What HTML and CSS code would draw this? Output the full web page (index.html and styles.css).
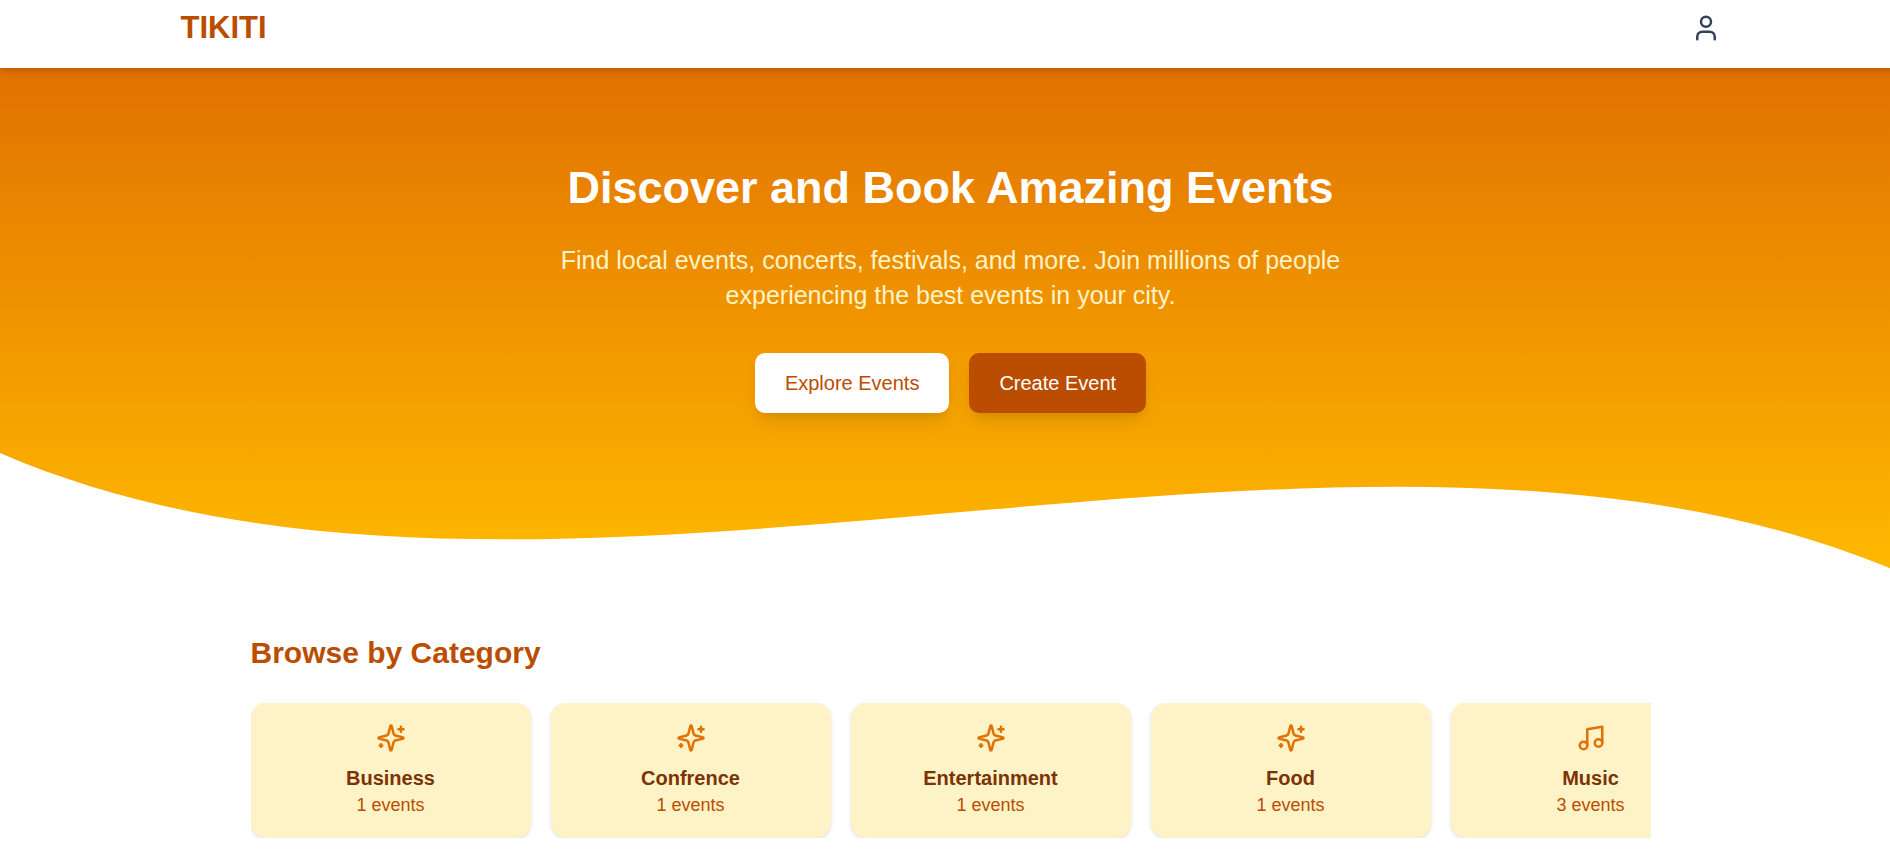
FILE: index.html
```html
<!DOCTYPE html>
<html lang="en">
<head>
<meta charset="utf-8">
<meta name="viewport" content="width=device-width, initial-scale=1">
<title>TIKITI</title>
<link rel="stylesheet" href="styles.css">
</head>
<body>
<svg class="symbols" aria-hidden="true">
  <symbol id="sparkles" viewBox="0 0 24 24">
    <path d="M9.937 15.5A2 2 0 0 0 8.5 14.063l-6.135-1.582a.5.5 0 0 1 0-.962L8.5 9.936A2 2 0 0 0 9.937 8.5l1.582-6.135a.5.5 0 0 1 .963 0L14.063 8.5A2 2 0 0 0 15.5 9.937l6.135 1.581a.5.5 0 0 1 0 .964L15.5 14.063a2 2 0 0 0-1.437 1.437l-1.582 6.135a.5.5 0 0 1-.963 0z"/>
    <path d="M20 3v4M22 5h-4M4 17v2M5 18H3"/>
  </symbol>
  <symbol id="music" viewBox="0 0 24 24">
    <path d="M9 18V5l12-2v13"/><circle cx="6" cy="18" r="3"/><circle cx="18" cy="16" r="3"/>
  </symbol>
  <symbol id="user" viewBox="0 0 24 24">
    <path d="M19 21v-2a4 4 0 0 0-4-4H9a4 4 0 0 0-4 4v2"/><circle cx="12" cy="7" r="4"/>
  </symbol>
</svg>
<div class="page">
  <header class="header">
    <div class="header-inner">
      <a class="logo" href="#">TIKITI</a>
      <button class="account" type="button" aria-label="Account"><svg class="icon"><use href="#user"/></svg></button>
    </div>
  </header>
  <main>
    <section class="hero">
      <svg class="wave" viewBox="0 0 1900 160" preserveAspectRatio="none" aria-hidden="true">
        <path d="M0 40C550 278 1350 -78 1900 160V161H0Z"/>
      </svg>
      <div class="hero-inner">
        <h1 class="hero-title">Discover and Book Amazing Events</h1>
        <p class="hero-text">Find local events, concerts, festivals, and more. Join millions of people experiencing the best events in your city.</p>
        <div class="actions">
          <a class="button button-light" href="#">Explore Events</a>
          <a class="button button-dark" href="#">Create Event</a>
        </div>
      </div>
    </section>
    <section class="categories">
      <h2 class="section-title">Browse by Category</h2>
      <div class="card-row">
        <a class="card" href="#"><svg class="icon"><use href="#sparkles"/></svg><h3 class="card-title">Business</h3><p class="card-count">1 events</p></a>
        <a class="card" href="#"><svg class="icon"><use href="#sparkles"/></svg><h3 class="card-title">Confrence</h3><p class="card-count">1 events</p></a>
        <a class="card" href="#"><svg class="icon"><use href="#sparkles"/></svg><h3 class="card-title">Entertainment</h3><p class="card-count">1 events</p></a>
        <a class="card" href="#"><svg class="icon"><use href="#sparkles"/></svg><h3 class="card-title">Food</h3><p class="card-count">1 events</p></a>
        <a class="card" href="#"><svg class="icon"><use href="#music"/></svg><h3 class="card-title">Music</h3><p class="card-count">3 events</p></a>
      </div>
    </section>
  </main>
</div>
</body>
</html>
```
FILE: styles.css
```css
*, *::before, *::after { box-sizing: border-box; }
html, body { overflow-x: hidden; }
body {
  margin: 0;
  background: #fff;
  font-family: "Liberation Sans", Arial, sans-serif;
  font-size: 20px;
  line-height: 30px;
}
h1, h2, h3, p { margin: 0; }
a { color: inherit; text-decoration: none; }
.symbols { display: none; }

.page { margin-right: -11px; }

.icon {
  display: block;
  width: 30px;
  height: 30px;
  fill: none;
  stroke: currentColor;
  stroke-width: 2;
  stroke-linecap: round;
  stroke-linejoin: round;
}

.header {
  position: relative;
  z-index: 1;
  background: #fff;
  box-shadow: 0 5px 8px -1px rgba(0, 0, 0, 0.1), 0 3px 5px -2px rgba(0, 0, 0, 0.1);
}
.header-inner {
  display: flex;
  align-items: center;
  justify-content: space-between;
  max-width: 1600px;
  margin: 0 auto;
  padding: 8px 30px 20px;
}
.logo {
  color: #bb4d00;
  font-size: 31px;
  font-weight: 700;
  line-height: 40px;
}
.account {
  padding: 0;
  border: 0;
  background: none;
  color: #314158;
  cursor: pointer;
}

.hero {
  position: relative;
  padding: 95px 30px 160px;
  background: linear-gradient(#e17100, #ffb900);
}
.wave {
  position: absolute;
  bottom: 0;
  left: 0;
  width: 100%;
  height: 160px;
  fill: #fff;
}
.hero-inner {
  position: relative;
  display: flex;
  flex-direction: column;
  align-items: center;
  max-width: 840px;
  margin: 0 auto;
  text-align: center;
}
.hero-title {
  margin-bottom: 30px;
  color: #fff;
  font-size: 45px;
  line-height: 50px;
  white-space: nowrap;
}
.hero-text {
  margin-bottom: 40px;
  color: #fef3c6;
  font-size: 25px;
  line-height: 35px;
}
.actions { display: flex; gap: 20px; }
.button {
  padding: 15px 30px;
  border-radius: 10px;
  box-shadow: 0 12px 19px -4px rgba(0, 0, 0, 0.1), 0 5px 8px -5px rgba(0, 0, 0, 0.1);
}
.button-light { background: #fff; color: #bb4d00; }
.button-dark { background: #bb4d00; color: #fff; }

.categories {
  max-width: 1400px;
  margin: 0 auto;
  padding: 60px 0 16px;
}
.section-title {
  margin-bottom: 30px;
  color: #bb4d00;
  font-size: 30px;
  line-height: 40px;
}
.card-row {
  display: flex;
  gap: 20px;
  overflow: hidden;
}
.card {
  display: flex;
  flex: 0 0 280px;
  flex-direction: column;
  align-items: center;
  padding: 20px;
  border-radius: 15px;
  background: #fef3c6;
  box-shadow: 0 1px 4px rgba(0, 0, 0, 0.1), 0 1px 3px -1px rgba(0, 0, 0, 0.1);
  color: #e17100;
}
.card-title {
  margin-top: 10px;
  color: #7b3306;
  font-size: 20px;
  line-height: 30px;
}
.card-count {
  color: #bb4d00;
  font-size: 18px;
  line-height: 25px;
}
```
